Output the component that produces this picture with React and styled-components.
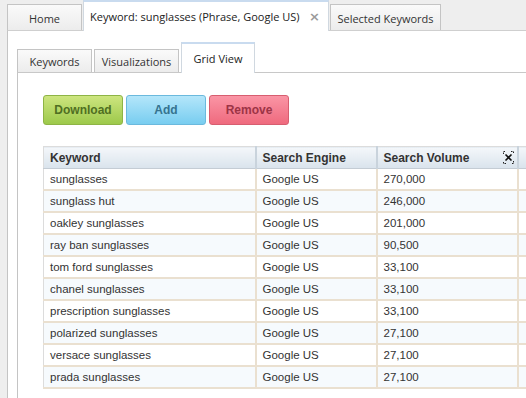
import React from 'react'
import styled, { createGlobalStyle } from 'styled-components'

const rows = [
    ['sunglasses', 'Google US', '270,000'],
    ['sunglass hut', 'Google US', '246,000'],
    ['oakley sunglasses', 'Google US', '201,000'],
    ['ray ban sunglasses', 'Google US', '90,500'],
    ['tom ford sunglasses', 'Google US', '33,100'],
    ['chanel sunglasses', 'Google US', '33,100'],
    ['prescription sunglasses', 'Google US', '33,100'],
    ['polarized sunglasses', 'Google US', '27,100'],
    ['versace sunglasses', 'Google US', '27,100'],
    ['prada sunglasses', 'Google US', '27,100'],
]

function App() {
    return <Page>
        <GlobalStyle />
        <TopTabs>
            <Tab width={75}>Home</Tab>
            <ActiveTab width={246}>
                <span>Keyword: sunglasses (Phrase, Google US)</span>
                <Close>×</Close>
            </ActiveTab>
            <Tab width={111}>Selected Keywords</Tab>
        </TopTabs>
        <Panel>
            <InnerTabs>
                <Tab width={75} small>Keywords</Tab>
                <Tab width={85} small>Visualizations</Tab>
                <ActiveTab width={74} small center>Grid View</ActiveTab>
            </InnerTabs>
            <InnerPanel>
                <Buttons>
                    <Button kind="green">Download</Button>
                    <Button kind="blue">Add</Button>
                    <Button kind="red">Remove</Button>
                </Buttons>
                <Table>
                    <colgroup>
                        <col style={{ width: 212 }} />
                        <col style={{ width: 121 }} />
                        <col style={{ width: 141 }} />
                        <col style={{ width: 60 }} />
                    </colgroup>
                    <thead>
                        <tr>
                            <Th>Keyword</Th>
                            <Th>Search Engine</Th>
                            <Th>
                                <HeadInner>
                                    Search Volume
                                    <svg width="11" height="13" viewBox="0 0 11 13">
                                        <path d="M0.5 3V0.5H3M8 0.5H10.5V3M10.5 10V12.5H8M3 12.5H0.5V10" stroke="#222" fill="none" strokeDasharray="1.5 1" />
                                        <path d="M2.5 3.5L8.5 9.5M8.5 3.5L2.5 9.5" stroke="#111" strokeWidth="1.6" />
                                    </svg>
                                </HeadInner>
                            </Th>
                            <Th></Th>
                        </tr>
                    </thead>
                    <tbody>
                        {rows.map((r, i) => (
                            <Row key={i} alt={i % 2 === 1}>
                                <Td>{r[0]}</Td>
                                <Td>{r[1]}</Td>
                                <Td>{r[2]}</Td>
                                <Td></Td>
                            </Row>
                        ))}
                    </tbody>
                </Table>
            </InnerPanel>
        </Panel>
    </Page>
}

export default App

const GlobalStyle = createGlobalStyle`
    body {
        margin: 0;
        background: #efefef;
    }
`
const Page = styled.div`
    width: 526px;
    height: 398px;
    overflow: hidden;
    background: #eeeeee;
    font-family: 'Open Sans', sans-serif;
`
const TopTabs = styled.div`
    display: flex;
    align-items: flex-end;
    height: 30px;
    padding-left: 7px;
    gap: 1px;
`
const Tab = styled.div`
    box-sizing: border-box;
    flex-shrink: 0;
    white-space: nowrap;
    width: ${props => props.width}px;
    height: ${props => props.small ? 23 : 26}px;
    border: 1px solid #c4c4c4;
    border-bottom: none;
    background: linear-gradient(#fafafa, #ececec);
    color: #333;
    font-size: 11px;
    display: flex;
    align-items: center;
    justify-content: center;
    padding-top: 1px;
    margin-right: ${props => props.small ? 1 : 0}px;
`
const ActiveTab = styled.div`
    box-sizing: border-box;
    flex-shrink: 0;
    white-space: nowrap;
    width: ${props => props.width}px;
    height: 31px;
    margin-bottom: -1px;
    background: #fff;
    border: 1px solid #d0d8e0;
    border-top: 2px solid #c9dbef;
    border-bottom: none;
    color: #222;
    font-size: 11px;
    display: flex;
    align-items: center;
    justify-content: ${props => props.center ? 'center' : 'space-between'};
    padding: 0 ${props => props.center ? 0 : 8}px 0 ${props => props.center ? 0 : 6}px;
    position: relative;
    z-index: 1;
`
const Close = styled.span`
    color: #9a9a9a;
    font-size: 13px;
    font-weight: bold;
    font-family: 'DejaVu Sans', sans-serif;
`
const Panel = styled.div`
    background: #fff;
    border-left: 1px solid #c4c4c4;
    border-top: 1px solid #cfcfcf;
    margin-left: 7px;
    height: 368px;
    box-sizing: border-box;
    padding: 11px 0 0 9px;
`
const InnerTabs = styled.div`
    display: flex;
    align-items: flex-end;
    height: 30px;
    gap: 1px;
`
const InnerPanel = styled.div`
    border-left: 1px solid #c4c4c4;
    border-top: 1px solid #c8c8c8;
    height: 400px;
    padding: 22px 0 0 25px;
`
const Buttons = styled.div`
    display: flex;
    gap: 2px;
    margin-bottom: 21px;
`
const palette = {
    green: { top: '#cde57f', bottom: '#9dc94b', border: '#8eb445', text: '#4f6f22' },
    blue: { top: '#b4e6fa', bottom: '#78cdf0', border: '#6bb9dd', text: '#35738f' },
    red: { top: '#fa95a5', bottom: '#ef6a7e', border: '#d75e70', text: '#9c3446' },
}
const Button = styled.button`
    box-sizing: border-box;
    width: 80px;
    height: 30px;
    border-radius: 3px;
    border: 1px solid ${props => palette[props.kind].border};
    background: linear-gradient(${props => palette[props.kind].top}, ${props => palette[props.kind].bottom});
    color: ${props => palette[props.kind].text};
    font-family: 'Liberation Sans', Arial, sans-serif;
    font-weight: bold;
    font-size: 12px;
    padding: 0;
    margin-right: 1px;
`
const Table = styled.table`
    width: 534px;
    border-collapse: collapse;
    table-layout: fixed;
    border-top: 1px solid #dcdcdc;
    border-left: 1px solid #dcdcdc;
    font-family: 'Liberation Sans', Arial, sans-serif;
`
const Th = styled.th`
    height: 21px;
    padding: 0 6px;
    text-align: left;
    font-size: 12px;
    font-weight: bold;
    color: #333;
    background: linear-gradient(#f4f7fa, #d9e3ec);
    border-right: 2px solid #c9d3dc;
    border-bottom: 1px solid #c4ccd4;
`
const HeadInner = styled.div`
    display: flex;
    justify-content: space-between;
    align-items: center;
    margin-right: -3px;
`
const Row = styled.tr`
    background: ${props => props.alt ? '#f6fafd' : '#fff'};
`
const Td = styled.td`
    height: 20px;
    padding: 0 6px;
    font-size: 11.5px;
    color: #333;
    border-right: 2px solid #eae0d0;
    border-bottom: 2px solid #eae0d0;
    white-space: nowrap;
`
